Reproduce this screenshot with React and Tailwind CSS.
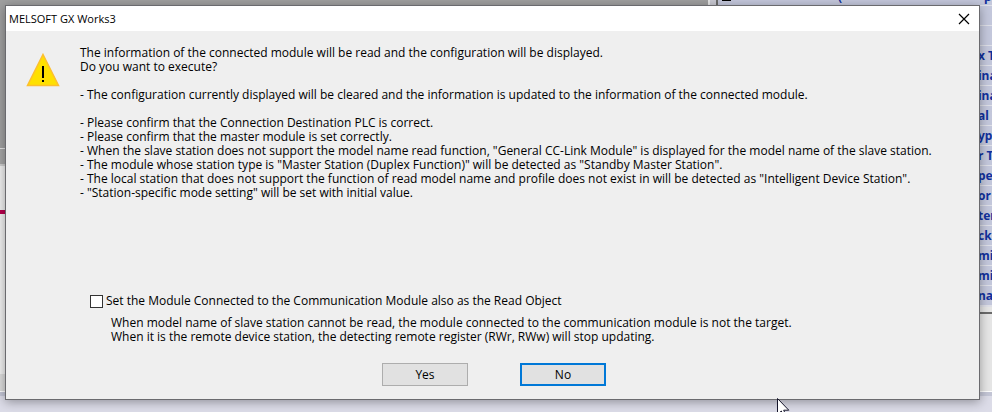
import { useState } from 'react'
import clsx from 'clsx'

const notes = [
  'Please confirm that the Connection Destination PLC is correct.',
  'Please confirm that the master module is set correctly.',
  'When the slave station does not support the model name read function, "General CC-Link Module" is displayed for the model name of the slave station.',
  'The module whose station type is "Master Station (Duplex Function)" will be detected as "Standby Master Station".',
  'The local station that does not support the function of read model name and profile does not exist in will be detected as "Intelligent Device Station".',
  '"Station-specific mode setting" will be set with initial value.',
]

const listRows = ['', '', 'x T', 'ina', 'ina', 'al I', 'ype', 'r T', 'pe', 'or', 'ter', 'ck', 'mi', 'mi', 'na']

function WarningIcon() {
  return (
    <svg width="34" height="34" viewBox="0 0 34 34" className="block shrink-0" aria-hidden="true">
      <path d="M17 1.5 L32.5 32.5 H1.5 Z" fill="#ffe000" stroke="#fdbf2d" strokeWidth="1.5" />
      <path d="M16 13h2v12h-2zM16 27h2v2h-2z" fill="#000" />
    </svg>
  )
}

function Workspace() {
  return (
    <div className="flex h-screen flex-col bg-[#cfcfda]" aria-hidden="true">
      <div className="flex min-h-0 flex-1">
        {/* Editor pane */}
        <div className="flex flex-1 flex-col">
          <div className="h-[148px] bg-[#a0a0a0]" />
          <div className="h-4 border-t border-[#e4e4e4] bg-[#a6a6a6]" />
          <div className="h-[46px] border-t-2 border-[#cdcdcd] bg-[#efefef]" />
          <div className="h-1 bg-[#b8004c]" />
          <div className="flex-1 bg-[#f0f0f0]" />
          <div className="h-[18px] border-b border-white bg-[#dcdcdc]" />
        </div>
        <div className="w-2 border-l-2 border-[#e6e6e6] bg-[#c9c9d2]" />
        <div className="w-1 border-l-2 border-[#6b6b6b] bg-[#c0c4d6]" />

        {/* Module list */}
        <div className="flex w-[272px] flex-col bg-[#c4c8dc] font-['Noto_Sans',sans-serif] text-[12px] font-bold text-[#10309c]">
          <div className="flex h-[5px] items-end leading-4">
            <span className="w-[118px] pl-0.5">
              <span className="block h-[5px] w-[9px] border-t border-black" />
            </span>
            <span className="flex-1">(</span>
            <span className="w-2">p</span>
          </div>
          {listRows.map((text, i) => (
            <div key={i} className="flex h-5 shrink-0 justify-end border-t border-[#dfe0e8]">
              <span className="w-[14px] whitespace-nowrap leading-[19px]">{text}</span>
            </div>
          ))}
          <div className="h-[9px] shrink-0 border-t-2 border-b-2 border-t-[#dfe0e8] border-b-[#6b6b6b] bg-[#e6e6e6]" />
          <div className="flex-1 border-b border-white bg-[#e6e6e6]" />
        </div>
      </div>
      <div className="h-5 border-t-4 border-[#c4c6d6] bg-[#dcdce8]" />
    </div>
  )
}

function DialogButton({ primary, children }) {
  return (
    <button
      type="button"
      className={clsx(
        'h-[23px] w-[86px] bg-[#e1e1e1] leading-[14px]',
        primary ? 'border-2 border-[#0078d7]' : 'border border-[#adadad]'
      )}
    >
      {children}
    </button>
  )
}

export default function App() {
  const [readConnected, setReadConnected] = useState(false)

  return (
    <div className="relative overflow-hidden">
      <Workspace />

      <div className="absolute inset-0 pt-[5px] pr-3 pl-[5px]">
        <div
          role="dialog"
          aria-labelledby="dialog-title"
          className="border border-[#6a6a6e] bg-[#efefef] font-['Open_Sans',sans-serif] text-[12px] leading-[14px] text-black shadow-[0_2px_10px_rgba(0,0,0,0.35)]"
        >
          <header className="flex h-[25px] items-center justify-between bg-white pr-[9px] pl-[3px]">
            <h1 id="dialog-title" className="text-[11px]">MELSOFT GX Works3</h1>
            <button type="button" aria-label="Close">
              <svg width="12" height="12" viewBox="0 0 12 12" className="block">
                <path d="M1 1 L11 11 M11 1 L1 11" stroke="#000" strokeWidth="1.2" />
              </svg>
            </button>
          </header>

          <div className="flex gap-5 pt-[15px] pl-5">
            <div className="pt-[7px]">
              <WarningIcon />
            </div>
            <div>
              <p>The information of the connected module will be read and the configuration will be displayed.</p>
              <p>Do you want to execute?</p>
              <p className="my-[14px]">
                - The configuration currently displayed will be cleared and the information is updated to the information of the connected module.
              </p>
              {notes.map((note) => (
                <p key={note}>- {note}</p>
              ))}
            </div>
          </div>

          <div className="mt-[94px] pl-[84px]">
            <label className="flex items-center gap-[3px]">
              <input
                type="checkbox"
                checked={readConnected}
                onChange={(e) => setReadConnected(e.target.checked)}
                className="h-[13px] w-[13px] appearance-none border border-[#333] bg-white checked:bg-[#0078d7]"
              />
              Set the Module Connected to the Communication Module also as the Read Object
            </label>
            <div className="mt-2 pl-[21px]">
              <p>When model name of slave station cannot be read, the module connected to the communication module is not the target.</p>
              <p>When it is the remote device station, the detecting remote register (RWr, RWw) will stop updating.</p>
            </div>
          </div>

          <div className="flex justify-center gap-[52px] pt-[19px] pb-[13px] pl-[3px]">
            <DialogButton>Yes</DialogButton>
            <DialogButton primary>No</DialogButton>
          </div>
        </div>
      </div>

      {/* Mouse pointer */}
      <svg width="13" height="20" viewBox="0 0 13 20" className="absolute top-[398px] left-[777px]" aria-hidden="true">
        <path d="M0.5 0.5 V16.5 L4.3 13 L7 19 L9.3 18 L6.7 12.2 H11.8 Z" fill="#fff" stroke="#15152a" />
      </svg>
    </div>
  )
}
